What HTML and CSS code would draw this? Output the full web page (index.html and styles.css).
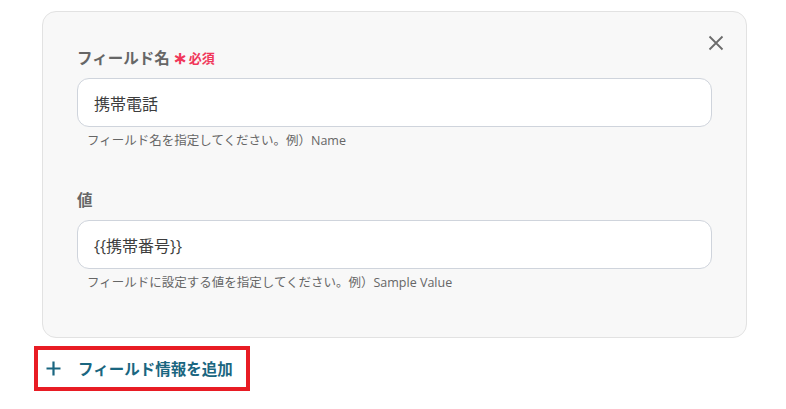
FILE: index.html
```html
<!DOCTYPE html>
<html lang="ja">
<head>
<meta charset="utf-8">
<link rel="stylesheet" href="styles.css">
</head>
<body>
<div class="page">
  <div class="card">
    <button class="close" aria-label="閉じる">
      <svg width="16" height="16" viewBox="0 0 16 16"><path d="M1.5 1.5 L14.5 14.5 M14.5 1.5 L1.5 14.5" stroke="#6b6b6b" stroke-width="1.8" fill="none"/></svg>
    </button>
    <div class="field">
      <div class="label">フィールド名<span class="req"><span class="star">∗</span>必須</span></div>
      <div class="input">携帯電話</div>
      <div class="help">フィールド名を指定してください。例）Name</div>
    </div>
    <div class="field second">
      <div class="label">値</div>
      <div class="input">{{携帯番号}}</div>
      <div class="help">フィールドに設定する値を指定してください。例）Sample Value</div>
    </div>
  </div>
  <div class="add">
    <svg class="plus" width="15" height="15" viewBox="0 0 15 15"><path d="M7.5 0.5 V14.5 M0.5 7.5 H14.5" stroke="#1a6680" stroke-width="2.2" fill="none"/></svg>
    <span class="add-text">フィールド情報を追加</span>
  </div>
</div>
</body>
</html>
```

FILE: styles.css
```css
html, body {
  margin: 0;
  padding: 0;
  background: #ffffff;
  font-family: "Open Sans", "Noto Sans CJK JP", "Noto Sans", sans-serif;
}

.page {
  padding: 11px 0 0 34px;
}

.card {
  position: relative;
  box-sizing: border-box;
  width: 705px;
  height: 327px;
  margin-left: 8px;
  background: #f8f8f8;
  border: 1px solid #e2e2e2;
  border-radius: 14px;
  padding: 35px 35px 0 34px;
}

.close {
  position: absolute;
  top: 23px;
  right: 22px;
  width: 16px;
  height: 16px;
  padding: 0;
  border: 0;
  background: transparent;
  display: flex;
}

.label {
  height: 22px;
  line-height: 22px;
  font-size: 15.5px;
  font-weight: 700;
  color: #666666;
  display: flex;
  align-items: center;
}

.req {
  color: #f0375a;
  font-size: 13px;
  font-weight: 700;
  margin-left: 3px;
  display: flex;
  align-items: center;
}

.star {
  font-size: 17px;
  margin-right: 2px;
  font-weight: 700;
}

.input {
  box-sizing: border-box;
  margin-top: 9px;
  height: 49px;
  width: 635px;
  background: #ffffff;
  border: 1px solid #cfd4dc;
  border-radius: 12px;
  padding: 0 16px;
  display: flex;
  align-items: center;
  font-size: 16px;
  color: #3d3d3d;
}

.help {
  margin-top: 4px;
  height: 20px;
  line-height: 20px;
  padding-left: 10px;
  font-size: 12.5px;
  color: #666666;
}

.second {
  margin-top: 38px;
}

.add {
  box-sizing: border-box;
  margin-top: 8px;
  width: 216px;
  height: 45px;
  border: 4px solid #e81c24;
  display: flex;
  align-items: center;
  padding-left: 8px;
}

.plus {
  flex: none;
}

.add-text {
  margin-left: 17px;
  font-size: 15.5px;
  font-weight: 700;
  color: #1a6680;
}
```
